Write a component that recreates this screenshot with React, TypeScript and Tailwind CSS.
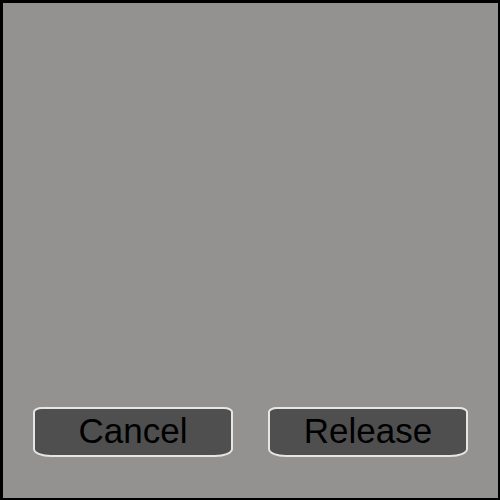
import React from 'react';

/**
 * Release dialog
 * Gray panel with a Cancel / Release button pair along the bottom
 */
function DialogButton({ label }: { label: string }) {
  return (
    <button className="w-[200px] h-[50px] bg-[#4f4f4f] border-2 border-[#e6e6e6] rounded-[9px_9px_18px_18px/5px_5px_8px_8px] flex items-center justify-center text-black text-[35px] leading-none pb-[4px] font-['Liberation_Sans',Arial,sans-serif]">
      {label}
    </button>
  );
}

export default function App() {
  return (
    <div className="w-[500px] h-[500px] bg-[#939290] border-l-[3px] border-t-[3px] border-r-2 border-b-2 border-black flex flex-col justify-end">
      {/* Actions */}
      <div className="flex gap-[35px] pl-[30px] pb-[41px]">
        <DialogButton label="Cancel" />
        <DialogButton label="Release" />
      </div>
    </div>
  );
}
